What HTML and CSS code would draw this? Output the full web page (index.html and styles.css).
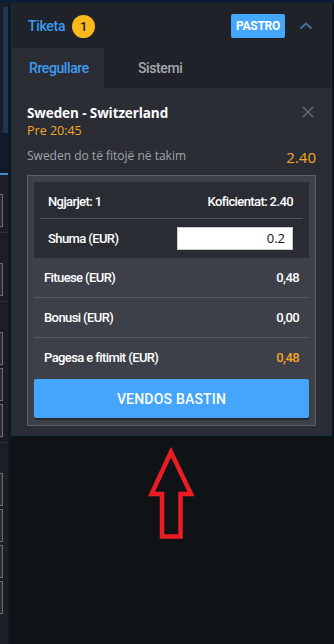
FILE: index.html
```html
<!DOCTYPE html>
<html>
<head>
<meta charset="utf-8">
<link rel="stylesheet" href="styles.css">
</head>
<body>
<div class="topbar"></div>
<div class="page">
  <aside class="side">
    <div class="side-col">
      <div class="side-blue"></div>
      <div class="side-navy"></div>
      <div class="side-line"></div>
      <div class="side-gap"></div>
      <div class="sbox b1"></div>
      <div class="ssep"></div>
      <div class="sbox b2"></div>
      <div class="ssep"></div>
      <div class="sbox b3"></div>
      <div class="sbox b4"></div>
      <div class="sbox b5"></div>
      <div class="ssep"></div>
      <div class="sbox b6"></div>
      <div class="sbox b7"></div>
      <div class="sbox b8"></div>
      <div class="sbox b9"></div>
    </div>
    <div class="side-dark"></div>
  </aside>
  <main class="main">
    <section class="panel">
      <header class="head">
        <span class="title">Tiketa</span>
        <span class="badge">1</span>
        <span class="spacer"></span>
        <button class="pastro">PASTRO</button>
        <svg class="chev" width="14" height="8" viewBox="0 0 14 8"><path d="M1.5 6.5 L7 1.5 L12.5 6.5" fill="none" stroke="#3a72a6" stroke-width="2"/></svg>
      </header>
      <nav class="tabs">
        <div class="tab active">Rregullare</div>
        <div class="tab">Sistemi</div>
      </nav>
      <div class="content">
        <div class="event">
          <div class="event-top">
            <div>
              <div class="match">Sweden - Switzerland</div>
              <div class="time">Pre 20:45</div>
            </div>
            <svg class="close" width="12" height="12" viewBox="0 0 12 12"><path d="M1 1 L11 11 M11 1 L1 11" stroke="#6d7078" stroke-width="1.2"/></svg>
          </div>
          <div class="pick">
            <span class="pick-name">Sweden do të fitojë në takim</span>
            <span class="odd">2.40</span>
          </div>
        </div>
        <div class="slip">
          <div class="slip-top">
            <div class="srow r1">
              <span>Ngjarjet: 1</span>
              <span>Koficientat: 2.40</span>
            </div>
            <div class="srow r2">
              <span>Shuma (EUR)</span>
              <div class="input">0.2</div>
            </div>
          </div>
          <div class="lrow">
            <span>Fituese (EUR)</span>
            <span>0,48</span>
          </div>
          <div class="lrow">
            <span>Bonusi (EUR)</span>
            <span>0,00</span>
          </div>
          <div class="lrow last">
            <span>Pagesa e fitimit (EUR)</span>
            <span class="orange">0,48</span>
          </div>
          <button class="bet">VENDOS BASTIN</button>
        </div>
      </div>
    </section>
    <svg class="arrow" width="323" height="110" viewBox="11 434 323 110">
      <polygon points="171,450 151.5,492 162,492 162,534.5 180.5,534.5 180.5,492 191,492" fill="none" stroke="#ec1c24" stroke-width="4.5" stroke-linejoin="miter"/>
    </svg>
  </main>
</div>
</body>
</html>
```
FILE: styles.css
```css
* { box-sizing: border-box; }
html, body { margin: 0; padding: 0; }
body {
  width: 334px;
  height: 644px;
  overflow: hidden;
  background: #101316;
  font-family: "Open Sans", "Liberation Sans", sans-serif;
  color: #fff;
}
.topbar { height: 3px; background: #0f1e38; }
.page { display: flex; height: 641px; }
.side { width: 11px; display: flex; flex-shrink: 0; }
.side-col { width: 8px; background: #1b1e24; display: flex; flex-direction: column; }
.side-blue { height: 126px; margin-left: 3px; margin-top: 4px; background: #1d3756; }
.side-navy { height: 40px; background: #111a28; }
.side-line { height: 2px; background: #3a8ed6; }
.side-gap { height: 19px; }
.sbox { width: 3px; height: 33px; background: #2a2c31; border: 1px solid #6b6d72; border-left: none; margin-bottom: 3px; }
.ssep { height: 1px; background: #2e3138; margin: 2px 0 30px; }
.side-dark { width: 3px; background: #0f1a1f; }

.main { width: 323px; display: flex; flex-direction: column; }
.panel {
  width: 321px;
  border: 1px solid #0f3142;
  border-top: none;
  background: #2b2d35;
}
.head {
  height: 45px;
  background: #1f2229;
  display: flex;
  align-items: center;
  padding: 1px 18px 0 16px;
}
.title { color: #3d9bf0; font-size: 14px; font-weight: 500; font-family: "Roboto", sans-serif; letter-spacing: -0.3px; }
.badge {
  margin-left: 7px;
  width: 23px; height: 23px;
  border-radius: 50%;
  background: #fbb81b;
  color: #1a1a1a;
  font-size: 13px;
  font-weight: 500;
  font-family: "Roboto", sans-serif;
  display: flex; align-items: center; justify-content: center;
}
.spacer { flex: 1; }
.pastro {
  width: 54px; height: 24px;
  border: none; border-radius: 2px;
  background: #45a7fb;
  color: #fff;
  font-family: "Roboto", sans-serif;
  font-weight: 700;
  font-size: 12px;
  letter-spacing: -0.3px;
  padding: 0;
  margin-right: 14px;
}
.chev { display: block; }

.tabs { height: 40px; background: #1f2229; display: flex; }
.tab {
  font-family: "Roboto", sans-serif;
  font-size: 14px;
  font-weight: 500;
  letter-spacing: -0.4px;
  color: #a5a8ae;
  display: flex; align-items: center;
  padding-left: 34px;
}
.tab.active { width: 92px; background: #2b2d35; color: #3d9bf0; padding-left: 17px; }

.content { padding: 17px 15px 9px; }
.event-top { display: flex; justify-content: space-between; align-items: flex-start; }
.match { font-size: 13.5px; font-weight: 700; line-height: 16px; letter-spacing: -0.1px; }
.time { color: #f5a623; font-size: 12.5px; line-height: 20px; }
.close { margin-top: 1px; margin-right: 2px; }
.pick { display: flex; justify-content: space-between; align-items: center; margin-top: 2px; }
.pick-name { color: #a0a3aa; font-size: 12px; }
.odd { color: #f5a623; font-size: 15px; margin-top: 4px; }

.slip {
  margin-top: 8px;
  border: 1px solid #5d6068;
  background: #3e4049;
  padding: 6px 6px 7px;
}
.slip-top { background: #2a2c34; padding: 0 6px; }
.srow {
  display: flex; justify-content: space-between; align-items: center;
  font-family: "Roboto", sans-serif;
  font-size: 13px;
  font-weight: 500;
  letter-spacing: -0.6px;
  padding: 0 10px 0 8px;
}
.r1 { height: 37px; border-bottom: 1px solid #51545c; padding-top: 2px; }
.r2 { height: 39px; padding-right: 10px; }
.input {
  width: 116px; height: 23px;
  background: #fff;
  color: #111;
  border: 1px solid #ccc;
  font-family: "Open Sans", sans-serif;
  font-size: 13px;
  font-weight: 400;
  letter-spacing: 0;
  text-align: right;
  padding: 1px 7px 0 0;
}
.lrow {
  height: 40px;
  display: flex; justify-content: space-between; align-items: center;
  font-family: "Roboto", sans-serif;
  font-size: 13px;
  font-weight: 500;
  letter-spacing: -0.6px;
  padding: 0 10px;
  border-bottom: 1px solid #585b63;
}
.lrow.last { border-bottom: none; height: 38px; }
.orange { color: #f5a623; }
.bet {
  margin-top: 3px;
  width: 100%;
  height: 39px;
  border: none;
  border-radius: 2px;
  background: #45a4fb;
  color: #fff;
  font-family: "Roboto", sans-serif;
  font-size: 14px;
  font-weight: 500;
  letter-spacing: 0.2px;
  box-shadow: 0 2px 1px #26282e;
}
.arrow { display: block; }
```
